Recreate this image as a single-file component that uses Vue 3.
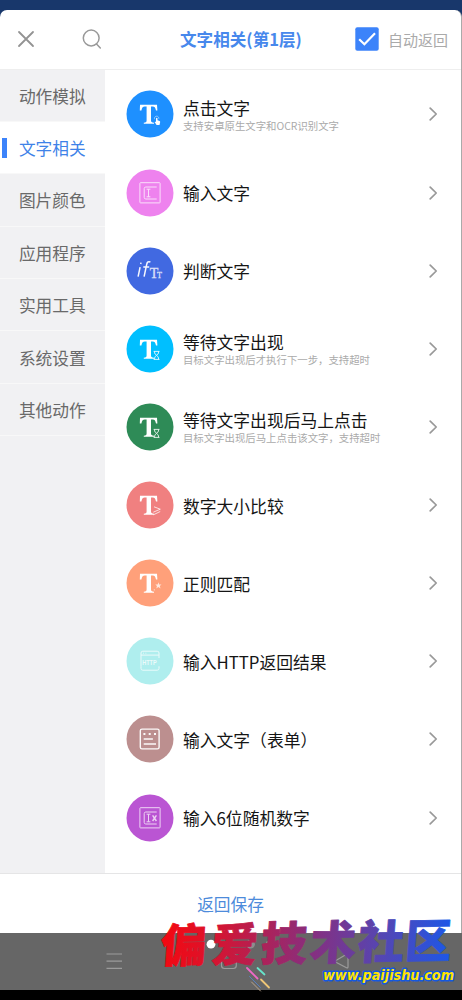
<script setup>
const categories = ['动作模拟', '文字相关', '图片颜色', '应用程序', '实用工具', '系统设置', '其他动作']
const activeCategory = '文字相关'
const actions = [
  { title: '点击文字', sub: '支持安卓原生文字和OCR识别文字', color: '#1e90ff', icon: 'tap' },
  { title: '输入文字', color: '#ee82ee', icon: 'input' },
  { title: '判断文字', color: '#4169e1', icon: 'if' },
  { title: '等待文字出现', sub: '目标文字出现后才执行下一步，支持超时', color: '#00bfff', icon: 'wait' },
  { title: '等待文字出现后马上点击', sub: '目标文字出现后马上点击该文字，支持超时', color: '#2e8b57', icon: 'wait' },
  { title: '数字大小比较', color: '#f08080', icon: 'compare' },
  { title: '正则匹配', color: '#ffa07a', icon: 'regex' },
  { title: '输入HTTP返回结果', color: '#afeeee', icon: 'http' },
  { title: '输入文字（表单）', color: '#bc8f8f', icon: 'form' },
  { title: '输入6位随机数字', color: '#ba55d3', icon: 'random' }
]
const hasBigT = (icon) => ['tap', 'wait', 'compare', 'regex'].includes(icon)
</script>

<template>
  <div class="screen">
    <div class="sheet">
      <header class="header">
        <svg class="close" viewBox="0 0 18 18"><path d="M2 2L16 16M16 2L2 16" /></svg>
        <svg class="search" viewBox="0 0 20 20"><circle cx="9.2" cy="9" r="7.9" /><path d="M14.5 15L18.3 19" /></svg>
        <h1 class="title">文字相关(第1层)</h1>
        <div class="check">
          <svg viewBox="0 0 24 24"><rect x=".3" y=".3" width="23.4" height="23.4" rx="2" /><path d="M4.2 12.2L9.4 17.2L20 6.3" /></svg>
          <span>自动返回</span>
        </div>
      </header>

      <main class="content">
        <nav class="sidebar">
          <div v-for="name in categories" :key="name" class="category" :class="{ active: name === activeCategory }">{{ name }}</div>
        </nav>
        <section class="list">
          <div v-for="item in actions" :key="item.title" class="row">
            <svg class="icon" viewBox="0 0 48 48">
              <circle cx="24" cy="24" r="23.5" :fill="item.color" />
              <path v-if="hasBigT(item.icon)" class="solid" d="M14 14.8H31L31.4 20.4H30C29.3 17.6 28.5 16.6 26.8 16.6H25V30.5C25 32 25.7 32.5 28 32.7V33.7H17.8V32.7C20 32.5 20.6 32 20.6 30.5V16.6H18.7C17 16.6 16.1 17.6 15.4 20.4H13.8Z" />
              <g v-if="item.icon === 'tap'">
                <path class="line thin" d="M28.6 29.2A2.2 2.2 0 1 1 32.8 28.8" />
                <path class="solid" d="M30 28.2Q30.8 27.4 31.5 28.2V30.2L33.6 31Q34.4 31.4 34.1 32.6L33.5 34.9H30.6L28.6 32.1Q29.1 31.4 30 31.8Z" />
              </g>
              <path v-else-if="item.icon === 'wait'" class="line hourglass" d="M27.6 26.4H33.5M27.6 34.4H33.5M28.6 26.5V28C28.6 29.5 32.5 31 32.5 33V34.3M32.5 26.5V28C32.5 29.5 28.6 31 28.6 33V34.3" />
              <path v-else-if="item.icon === 'compare'" class="line fine" d="M28 25.8L34.3 28.2L27.3 31.2M34.2 30.5L27.5 33.8" />
              <g v-else-if="item.icon === 'regex'">
                <path class="solid faded" d="M32.4 23.2L33.2 25.5L35.5 25.4L33.8 27L34.5 29.4L32.4 28L30.3 29.4L31 27L29.3 25.4L31.7 25.5Z" />
                <circle class="solid faded" cx="28.3" cy="30.8" r=".6" />
              </g>
              <g v-else-if="item.icon === 'input' || item.icon === 'random'" class="line frame">
                <rect x="13.9" y="13.7" width="20.2" height="20.2" rx=".6" />
                <path d="M30.7 18H19.8Q18.2 18 18.2 19.6V28.4Q18.2 30 19.8 30H30.7" />
                <path d="M20.6 20.2H24.4M22.5 20.2V27.8M20.6 27.8H24.4" />
                <path v-if="item.icon === 'random'" class="cross" d="M26.6 21.3L30.4 27M30.4 21.3L26.6 27" />
              </g>
              <g v-else-if="item.icon === 'if'">
                <path class="line script" d="M14.1 20.2L12.1 29.7M15 15.7L14.7 17M24.4 15C21.7 14 21.1 15.4 20.7 17.4L18.1 29.7M17.3 20H23.2" />
                <text class="small-t" x="23.7" y="30.6" font-size="14">T</text>
                <text class="small-t" x="31" y="30.6" font-size="8">T</text>
              </g>
              <g v-else-if="item.icon === 'http'" class="line frame">
                <path d="M15 20V16Q15 14.2 16.8 14.2H31.2Q33 14.2 33 16V21M15 29.6V31.4Q15 33.2 16.8 33.2H31.2Q33 33.2 33 31.4V29.3M15 18.1H33M15 20V29.6M17.2 16.2H18M19.5 16.2H20.3" />
                <text class="http-label" x="16.2" y="27.8" textLength="14.5" lengthAdjust="spacingAndGlyphs">HTTP</text>
              </g>
              <g v-else class="line form">
                <rect x="14.3" y="14.1" width="18.8" height="19.8" rx="1.7" />
                <path d="M17.7 24H26.9M17.7 29H30" />
                <path class="dots" d="M17.4 18.9H19.4M22.7 18.9H24.7M28 18.9H30" />
              </g>
            </svg>
            <div class="labels">
              <div class="name">{{ item.title }}</div>
              <div v-if="item.sub" class="sub">{{ item.sub }}</div>
            </div>
            <svg class="chevron" viewBox="0 0 9 14"><path d="M1.2 1.2L7.2 7L1.2 12.8" /></svg>
          </div>
        </section>
      </main>

      <footer class="footer">返回保存</footer>
    </div>
    <div class="navbar"></div>

    <svg class="overlay" viewBox="0 0 462 80">
      <defs>
        <linearGradient id="brand" gradientUnits="userSpaceOnUse" x1="160" y1="0" x2="450" y2="0">
          <stop offset="0" stop-color="#f40810" />
          <stop offset=".15" stop-color="#df1128" />
          <stop offset=".5" stop-color="#8b2d7b" />
          <stop offset=".75" stop-color="#5745b1" />
          <stop offset="1" stop-color="#1c57e8" />
        </linearGradient>
      </defs>
      <g class="nav-lines">
        <path d="M106.5 34H122M106.5 41.2H122M106.5 48.4H122" />
        <rect x="221.5" y="34" width="14.8" height="14.5" rx="3" />
        <path d="M348 35V46.8Q348 48.5 346.5 47.7L336 42.2Q335 41.3 336 40.5L346.5 34.2Q348 33.5 348 35Z" />
      </g>
      <circle cx="211" cy="24.2" r="4.4" fill="#fff" />
      <circle cx="250.5" cy="24.2" r="4.4" fill="#8d8d8d" />
      <circle cx="270" cy="24.2" r="4.2" fill="#8d8d8d" />
      <text class="brand" transform="translate(0 40) skewX(-5) rotate(-1 300 0)" y="0" x="160 211 260 309 357 404" fill="url(#brand)" stroke="url(#brand)">偏爱技术社区</text>
      <g class="sparks">
        <path stroke="#ef68c8" d="M247 48L257.5 58.5" />
        <path stroke="#67e5ca" d="M257.5 48L264.5 54.5" />
        <path stroke="#efc777" d="M261 59.5L269 67.5" />
        <path class="slim" stroke="#5880bd" d="M249.5 56.5L260.5 67.5" />
        <path class="slim" stroke="#bba58b" d="M251.5 62L260.5 71" />
      </g>
      <text class="site" x="323" y="60" textLength="131" lengthAdjust="spacingAndGlyphs">www.paijishu.com</text>
    </svg>
  </div>
</template>

<style>
body { margin: 0; }
</style>

<style scoped>
.screen {
  position: relative;
  box-sizing: border-box;
  width: 462px;
  height: 1000px;
  padding-top: 10px;
  overflow: hidden;
  background: linear-gradient(#18376b 0 80px, #666 80px 990px, #000 990px);
  font-family: "Noto Sans CJK SC", sans-serif;
}
.sheet {
  box-sizing: border-box;
  height: 922.5px;
  display: flex;
  flex-direction: column;
  background: #fff;
  border-right: 1px solid #aaa;
  border-radius: 7px 7px 0 0;
  overflow: hidden;
}
.header {
  box-sizing: border-box;
  height: 59.5px;
  flex: none;
  display: flex;
  align-items: center;
  padding: 0 13px 0 17px;
  border-bottom: 1px solid #eee;
}
svg { display: block; flex: none; }
.close, .search, .chevron { fill: none; stroke: #939393; stroke-linecap: round; stroke-linejoin: round; }
.close { width: 18px; height: 18px; stroke-width: 1.8; }
.search { width: 20px; height: 20px; margin-left: 46.5px; stroke-width: 1.5; stroke: #999; }
.title {
  margin: 0 0 0 78.5px;
  width: 124px;
  color: #4788ec;
  font-size: 16.6px;
  line-height: 24px;
  font-weight: 700;
  white-space: nowrap;
}
.check { display: flex; align-items: center; margin-left: auto; gap: 9px; color: #aaa; font-size: 15px; white-space: nowrap; }
.check svg { width: 24px; height: 24px; }
.check rect { fill: #3c83fa; }
.check path { fill: none; stroke: #fff; stroke-width: 2.2; }
.content { display: flex; flex: 1; min-height: 0; }
.sidebar { width: 104.5px; flex: none; background: #f1f1f3; }
.category {
  position: relative;
  box-sizing: border-box;
  height: 52.4px;
  display: flex;
  align-items: center;
  justify-content: center;
  padding-top: 1px;
  border-bottom: 1px solid #f8f8f8;
  color: #696969;
  font-size: 16.7px;
}
.category.active { background: #fff; color: #3e82e8; }
.category.active::before { content: ""; position: absolute; left: 2px; top: 16px; width: 4.5px; height: 20px; background: #3c83fa; }
.list { flex: 1; padding-top: 5.8px; }
.row { height: 78.15px; display: flex; align-items: center; padding: 0 23px 0 21.7px; }
.icon { width: 48px; height: 48px; }
.labels { flex: 1; margin-left: 8.8px; white-space: nowrap; }
.name { color: #151515; font-size: 16.8px; line-height: 22px; padding-top: 1px; }
.sub { color: #aaa; font-size: 10.4px; line-height: 14px; padding-top: 1px; margin: -1px 0 0; }
.chevron { width: 9px; height: 14px; stroke-width: 1.7; stroke: #999; }
.solid { fill: #fff; }
.faded { opacity: .75; }
.line { fill: none; stroke: #fff; stroke-width: 1; }
.thin { stroke-width: .8; opacity: .6; }
.fine { opacity: .75; }
.hourglass { stroke-width: .9; opacity: .9; }
.frame { opacity: .75; }
.cross { stroke-width: 1.4; }
.script { stroke-width: 1.5; opacity: .95; }
.form { stroke-width: 1.4; opacity: .95; }
.dots { stroke-width: 2; }
.small-t { font-family: "Liberation Serif", serif; fill: #fff; stroke: #fff; stroke-width: .3px; opacity: .8; }
.http-label { font: 700 6.5px "Liberation Sans", sans-serif; fill: #fff; stroke: none; }
.footer {
  box-sizing: border-box;
  height: 63.5px;
  margin-bottom: -4px;
  padding-bottom: 3px;
  flex: none;
  display: flex;
  align-items: center;
  justify-content: center;
  border-top: 1px solid #e5e5e6;
  color: #4d8bdb;
  font-size: 16.7px;
}
.navbar { height: 57.5px; background: #666; }
.overlay { position: absolute; left: 0; top: 920px; width: 462px; height: 80px; overflow: visible; }
.nav-lines { fill: none; stroke: #9b9b9b; stroke-width: 1.2; }
.brand { font: 900 46px "Noto Sans CJK SC", sans-serif; stroke-width: .8px; stroke-linejoin: round; }
.sparks { fill: none; stroke-width: 1.8; stroke-linecap: round; }
.slim { stroke-width: 1; }
.site {
  font: italic 700 14px "DejaVu Sans", sans-serif;
  fill: #ffe400;
  stroke: #1558df;
  stroke-width: 3px;
  stroke-linejoin: round;
  paint-order: stroke;
}
</style>
